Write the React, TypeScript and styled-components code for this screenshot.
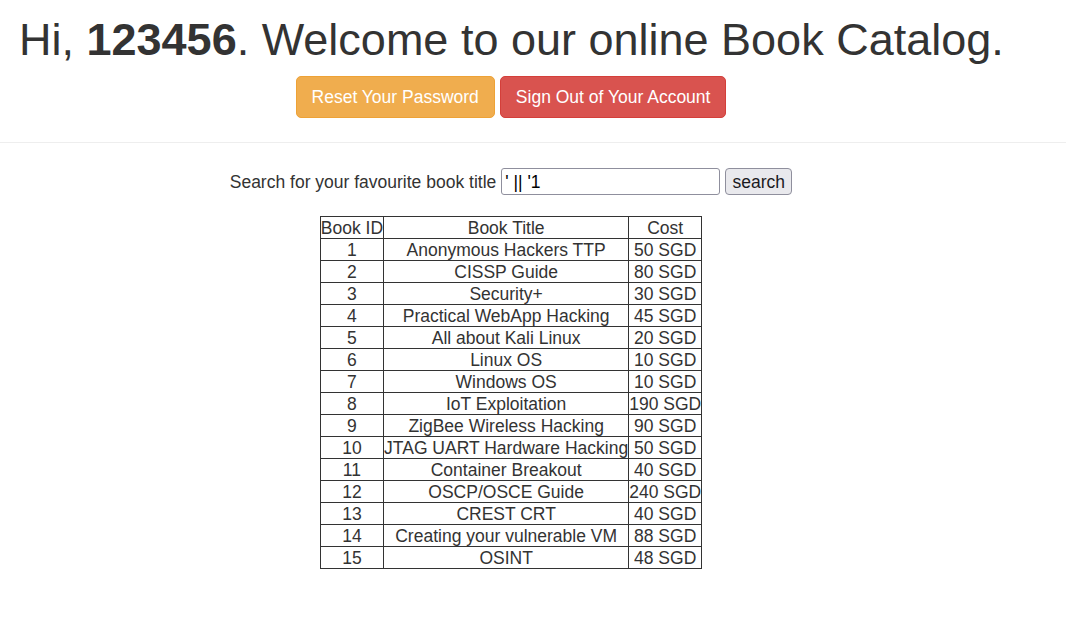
import React from "react";
import styled, { createGlobalStyle } from "styled-components";

const GlobalStyle = createGlobalStyle`
  html, body { margin: 0; padding: 0; background: #fff; }
  body {
    font-family: "Liberation Sans", Arial, Helvetica, sans-serif;
    font-size: 17.5px;
    color: #333;
  }
`;

const Header = styled.header`
  border-bottom: 1px solid #eee;
  padding-bottom: 24px;
`;

const Column = styled.div`
  width: 982px;
  margin-left: 20px;
  text-align: center;
`;

const Title = styled.h1`
  margin: 15px 0 0 -1px;
  font-size: 45px;
  font-weight: 500;
  line-height: 49px;
  white-space: nowrap;
  color: #333;
  b { font-weight: 700; }
`;

const ButtonRow = styled.div`
  margin-top: 12px;
  display: flex;
  justify-content: center;
  gap: 5px;
`;

const ActionButton = styled.a<{ $variant: "warning" | "danger" }>`
  display: inline-flex;
  align-items: center;
  height: 42px;
  box-sizing: border-box;
  padding: 0 15px;
  border-radius: 5px;
  font-size: 17.5px;
  color: #fff;
  text-decoration: none;
  background: ${(p) => (p.$variant === "warning" ? "#f0ad4e" : "#d9534f")};
  border: 1px solid ${(p) => (p.$variant === "warning" ? "#eea236" : "#d43f3a")};
`;

const Main = styled.main`
  width: 1022px;
  display: flex;
  flex-direction: column;
  align-items: center;
`;

const SearchForm = styled.form`
  margin-top: 25px;
  display: flex;
  align-items: center;
  gap: 5px;
`;

const Label = styled.label`
  font-size: 17.5px;
  color: #333;
  white-space: nowrap;
  padding-top: 2px;
`;

const SearchInput = styled.input`
  box-sizing: border-box;
  width: 219px;
  height: 27px;
  border: 1px solid #8f8f9d;
  border-radius: 3px;
  padding: 2px 3px 0;
  font-family: inherit;
  font-size: 17.5px;
  color: #000;
  background: #fff;
  outline: none;
`;

const SearchButton = styled.button`
  box-sizing: border-box;
  width: 67px;
  height: 27px;
  border: 1px solid #8f8f9d;
  border-radius: 4px;
  background: #e9e9ed;
  font-family: inherit;
  font-size: 17.5px;
  color: #1b1b1f;
  padding: 2px 0 0;
`;

const Table = styled.table`
  margin-top: 21px;
  border-collapse: collapse;
  border: 1px solid #333;
`;

const Cell = styled.td`
  border: 1px solid #333;
  padding: 1px 0 0;
  text-align: center;
  font-size: 17.5px;
  line-height: 20px;
  white-space: nowrap;
  color: #333;
`;

const HeadCell = styled(Cell).attrs({ as: "th" })`
  font-weight: 400;
`;

const books: [number, string, string][] = [
  [1, "Anonymous Hackers TTP", "50 SGD"],
  [2, "CISSP Guide", "80 SGD"],
  [3, "Security+", "30 SGD"],
  [4, "Practical WebApp Hacking", "45 SGD"],
  [5, "All about Kali Linux", "20 SGD"],
  [6, "Linux OS", "10 SGD"],
  [7, "Windows OS", "10 SGD"],
  [8, "IoT Exploitation", "190 SGD"],
  [9, "ZigBee Wireless Hacking", "90 SGD"],
  [10, "JTAG UART Hardware Hacking", "50 SGD"],
  [11, "Container Breakout", "40 SGD"],
  [12, "OSCP/OSCE Guide", "240 SGD"],
  [13, "CREST CRT", "40 SGD"],
  [14, "Creating your vulnerable VM", "88 SGD"],
  [15, "OSINT", "48 SGD"],
];

export default function App() {
  return (
    <>
      <GlobalStyle />
      <Header>
        <Column>
          <Title>
            Hi, <b>123456</b>. Welcome to our online Book Catalog.
          </Title>
          <ButtonRow>
            <ActionButton $variant="warning" href="#">Reset Your Password</ActionButton>
            <ActionButton $variant="danger" href="#">Sign Out of Your Account</ActionButton>
          </ButtonRow>
        </Column>
      </Header>
      <Main>
        <SearchForm onSubmit={(e) => e.preventDefault()}>
          <Label htmlFor="q">Search for your favourite book title</Label>
          <SearchInput id="q" defaultValue="' || '1" />
          <SearchButton type="submit">search</SearchButton>
        </SearchForm>
        <Table>
          <thead>
            <tr>
              <HeadCell>Book ID</HeadCell>
              <HeadCell>Book Title</HeadCell>
              <HeadCell>Cost</HeadCell>
            </tr>
          </thead>
          <tbody>
            {books.map(([id, title, cost]) => (
              <tr key={id}>
                <Cell>{id}</Cell>
                <Cell>{title}</Cell>
                <Cell>{cost}</Cell>
              </tr>
            ))}
          </tbody>
        </Table>
      </Main>
    </>
  );
}
